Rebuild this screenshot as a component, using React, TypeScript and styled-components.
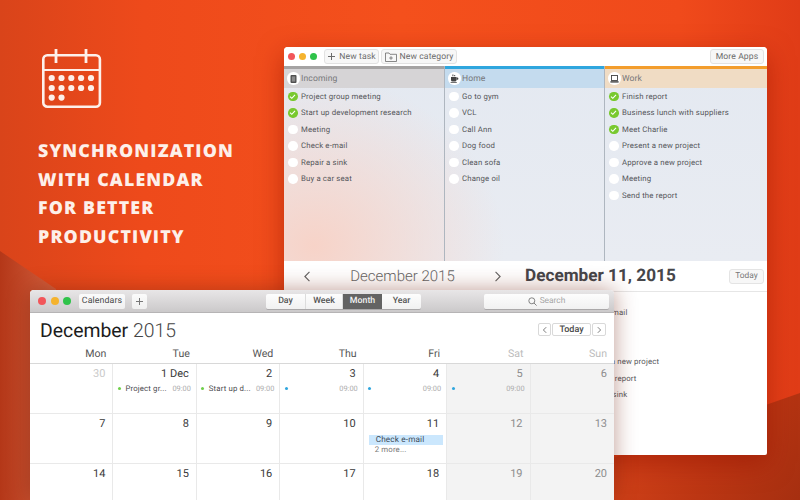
import * as React from 'react';
import styled, { createGlobalStyle } from 'styled-components';

const Global = createGlobalStyle`
  html, body { margin: 0; padding: 0; }
  body {
    font-family: Roboto, "Liberation Sans", sans-serif;
    text-rendering: geometricPrecision;
  }
`;

const Page = styled.div`
  position: relative;
  width: 800px;
  height: 500px;
  overflow: hidden;
  background: linear-gradient(90deg, #d9441a 0%, #ee4a1b 18%, #f4501c 50%, #f04a1b 85%, #e03c17 100%);
`;

const WedgeLeft = styled.div`
  position: absolute;
  left: 0;
  top: 251px;
  width: 56px;
  height: 249px;
  background: linear-gradient(90deg, #b43718, #d4613f);
  clip-path: polygon(0 0, 100% 38px, 100% 100%, 0 100%);
`;

const WedgeRight = styled.div`
  position: absolute;
  right: 0;
  bottom: 0;
  width: 200px;
  height: 107px;
  background: linear-gradient(120deg, #de481c 0%, #bc3613 60%, #a62f10 100%);
  clip-path: polygon(0 65%, 100% 0, 100% 100%, 0 100%);
`;

const Promo = styled.div`
  position: absolute;
  left: 38px;
  top: 49px;
  display: flex;
  flex-direction: column;
`;

const PromoIcon = styled.svg`
  width: 62px;
  height: 60px;
  margin-left: 3px;
`;

const Heading = styled.h1`
  margin: 28px 0 0;
  font-family: "Open Sans", "Liberation Sans", sans-serif;
  font-weight: 800;
  font-size: 17.8px;
  line-height: 28.7px;
  letter-spacing: 1.15px;
  color: #fdf0ea;
  text-transform: uppercase;
`;

const BackWindow = styled.div`
  position: absolute;
  left: 284px;
  top: 47px;
  width: 483px;
  height: 408px;
  background: #fff;
  border-radius: 4px 4px 2px 2px;
  overflow: hidden;
  display: flex;
  flex-direction: column;
  box-shadow: 0 8px 26px rgba(150, 20, 0, 0.55);
`;

const BackToolbar = styled.div`
  height: 19px;
  flex: none;
  display: flex;
  align-items: center;
  padding: 0 3px 0 4px;
  background: #fff;
`;

const Lights = styled.div<{ $size: number; $gap: number }>`
  display: flex;
  gap: ${(p) => p.$gap}px;
  span {
    width: ${(p) => p.$size}px;
    height: ${(p) => p.$size}px;
    border-radius: 50%;
  }
  span:nth-child(1) { background: #f2565a; }
  span:nth-child(2) { background: #f5b32e; }
  span:nth-child(3) { background: #2fc34a; }
`;

const ToolButton = styled.div<{ $width: number; $left?: number }>`
  width: ${(p) => p.$width}px;
  height: 15px;
  margin-left: ${(p) => p.$left || 0}px;
  box-sizing: border-box;
  border: 1px solid #e2e2e2;
  border-radius: 3px;
  background: #f7f7f7;
  display: flex;
  align-items: center;
  justify-content: center;
  gap: 3px;
  font-size: 8.6px;
  letter-spacing: 0.1px;
  color: #6b6b6b;
  white-space: nowrap;
`;

const Spacer = styled.div`
  flex: 1;
`;

const Board = styled.div`
  height: 195px;
  flex: none;
  display: grid;
  grid-template-columns: 161px 160px 162px;
  background:
    radial-gradient(ellipse 190px 170px at 30px 180px, #f7d3c8 0%, rgba(247, 211, 200, 0) 100%),
    linear-gradient(180deg, #e4e9f1, #e9ecf2);
`;

const Column = styled.div`
  display: flex;
  flex-direction: column;
  border-right: 1px solid #aeb6bf;
  &:last-child { border-right: 0; }
`;

const ColumnBar = styled.div<{ $color: string }>`
  height: 3px;
  background: ${(p) => p.$color};
`;

const ColumnHead = styled.div<{ $color: string }>`
  height: 19px;
  display: flex;
  align-items: center;
  gap: 1.5px;
  padding-left: 3px;
  background: ${(p) => p.$color};
  font-size: 8.6px;
  letter-spacing: 0.1px;
  color: #77777a;
`;

const HeadBadge = styled.div`
  width: 12.5px;
  height: 12.5px;
  border-radius: 50%;
  background: #fff;
  display: flex;
  align-items: center;
  justify-content: center;
`;

const TaskList = styled.div`
  display: flex;
  flex-direction: column;
`;

const Task = styled.div`
  height: 16.5px;
  display: flex;
  align-items: center;
  gap: 3.5px;
  padding-left: 4px;
  font-size: 7.8px;
  letter-spacing: 0.15px;
  color: #55565a;
  white-space: nowrap;
`;

const Tick = styled.div<{ $done?: boolean }>`
  width: 9.5px;
  height: 9.5px;
  flex: none;
  border-radius: 50%;
  background: ${(p) => (p.$done ? '#79c92f' : '#fff')};
  display: flex;
  align-items: center;
  justify-content: center;
`;

const DateBar = styled.div`
  height: 31px;
  flex: none;
  box-sizing: border-box;
  border-bottom: 1px solid #e6e6e6;
  display: grid;
  grid-template-columns: 241px 1fr 38px;
  align-items: center;
`;

const MonthNav = styled.div`
  display: flex;
  align-items: center;
  justify-content: space-between;
  padding: 0 0 0 17px;
  margin-right: 21px;
  font-size: 15px;
  font-weight: 300;
  color: #666;
`;

const SelectedDay = styled.div`
  font-size: 17.2px;
  font-weight: 700;
  color: #46464a;
  white-space: nowrap;
`;

const SmallToday = styled.div`
  width: 35px;
  height: 15px;
  border: 1px solid #e4e4e4;
  box-sizing: border-box;
  border-radius: 3px;
  background: #f7f7f7;
  font-size: 8.4px;
  line-height: 13px;
  text-align: center;
  color: #777;
`;

const AgendaList = styled.div`
  padding: 12.5px 0 0 297px;
  display: flex;
  flex-direction: column;
`;

const AgendaRow = styled.div`
  height: 16.5px;
  line-height: 16.5px;
  font-size: 7.8px;
  letter-spacing: 0.15px;
  color: #55565a;
  white-space: nowrap;
`;

const FrontWindow = styled.div`
  position: absolute;
  left: 30px;
  top: 290px;
  width: 584px;
  height: 210px;
  background: #fff;
  border-radius: 4px 4px 0 0;
  overflow: hidden;
  display: flex;
  flex-direction: column;
  box-shadow: 0 0 22px rgba(110, 30, 10, 0.45);
`;

const FrontToolbar = styled.div`
  height: 23px;
  flex: none;
  box-sizing: border-box;
  display: grid;
  grid-template-columns: 228px 155px 1fr;
  align-items: center;
  padding: 0 5px 0 8px;
  background: linear-gradient(180deg, #e8e6e7, #cbc9ca);
  border-bottom: 1px solid #b6b4b5;
`;

const ToolbarLeft = styled.div`
  display: flex;
  align-items: center;
`;

const PlainButton = styled.div<{ $width: number; $left: number }>`
  width: ${(p) => p.$width}px;
  height: 15px;
  margin-left: ${(p) => p.$left}px;
  border-radius: 2px;
  background: linear-gradient(180deg, #fbfbfb, #f0f0f0);
  display: flex;
  align-items: center;
  justify-content: center;
  font-size: 8.8px;
  letter-spacing: 0.1px;
  color: #4a4a4a;
`;

const Segments = styled.div`
  display: grid;
  grid-template-columns: 40px 37px 39px 39px;
  height: 15px;
  border-radius: 2px;
  overflow: hidden;
  background: linear-gradient(180deg, #fdfdfd, #f1f1f1);
  box-shadow: 0 1px 0 #aaa8a9;
`;

const Segment = styled.div<{ $active?: boolean }>`
  display: flex;
  align-items: center;
  justify-content: center;
  font-size: 8.8px;
  font-weight: 500;
  color: ${(p) => (p.$active ? '#f2f2f2' : '#555')};
  background: ${(p) => (p.$active ? '#636363' : 'transparent')};
  border-right: ${(p) => (p.$active ? '0' : '1px solid #dcdcdc')};
  &:last-child { border-right: 0; }
`;

const SearchBox = styled.div`
  justify-self: end;
  width: 125px;
  height: 15px;
  border-radius: 2px;
  background: linear-gradient(180deg, #fdfdfd, #f1f1f1);
  box-shadow: 0 1px 0 #aaa8a9;
  display: flex;
  align-items: center;
  justify-content: center;
  gap: 3px;
  font-size: 8.4px;
  color: #a5a5a5;
`;

const TitleRow = styled.div`
  height: 40px;
  flex: none;
  display: flex;
  justify-content: space-between;
  padding: 5px 8px 0 10px;
  box-sizing: border-box;
`;

const MonthTitle = styled.div`
  font-size: 19.4px;
  line-height: 26px;
  font-weight: 400;
  color: #1c1c1c;
  span {
    font-weight: 300;
    color: #444;
  }
`;

const Stepper = styled.div`
  display: grid;
  grid-template-columns: 13px 39px 14px;
  gap: 1px;
  height: 13px;
  margin-top: 5px;
`;

const StepButton = styled.div`
  border: 1px solid #d9d9d9;
  border-radius: 2px;
  display: flex;
  align-items: center;
  justify-content: center;
  font-size: 9px;
  font-weight: 500;
  color: #4a4a4a;
`;

const DayHeader = styled.div`
  height: 10px;
  flex: none;
  display: grid;
  grid-template-columns: repeat(7, 1fr);
  border-bottom: 1px solid #d8d8d8;
  padding-bottom: 4px;
  margin-top: -5px;
  padding-top: 1px;
  box-sizing: content-box;
`;

const DayName = styled.div<{ $weekend?: boolean }>`
  text-align: right;
  padding-right: 7px;
  font-size: 10.6px;
  line-height: 10px;
  color: ${(p) => (p.$weekend ? '#bcbcbc' : '#555')};
`;

const Grid = styled.div`
  display: grid;
  grid-template-columns: repeat(7, 1fr);
  grid-auto-rows: 50px;
`;

const Cell = styled.div<{ $weekend?: boolean }>`
  box-sizing: border-box;
  border-right: 1px solid #e9e9e9;
  border-bottom: 1px solid #e9e9e9;
  background: ${(p) => (p.$weekend ? '#f3f3f3' : '#fff')};
  padding-top: 3px;
  min-width: 0;
  &:nth-child(7n) { border-right: 0; }
`;

const DayNumber = styled.div<{ $tone: 'strong' | 'weekend' | 'muted' }>`
  text-align: right;
  padding-right: 7px;
  font-size: 11px;
  line-height: 14px;
  color: ${(p) => (p.$tone === 'strong' ? '#3a3a3a' : p.$tone === 'weekend' ? '#8c8c8c' : '#c9c9c9')};
`;

const EventRow = styled.div`
  display: flex;
  align-items: center;
  height: 12px;
  margin-top: 1px;
  padding: 0 5px 0 4.5px;
  font-size: 7.8px;
  color: #4b4b4f;
`;

const Dot = styled.i<{ $color: string }>`
  width: 3px;
  height: 3px;
  flex: none;
  border-radius: 50%;
  background: ${(p) => p.$color};
  margin-right: 4.5px;
`;

const EventName = styled.span`
  flex: 1;
  white-space: nowrap;
  letter-spacing: 0.15px;
`;

const EventTime = styled.span`
  color: #ababab;
  font-size: 7.4px;
`;

const Highlight = styled.div`
  height: 10px;
  margin: 4px 3px 0 5px;
  padding-left: 7px;
  background: #cbe7fd;
  font-size: 8.2px;
  line-height: 10px;
  letter-spacing: 0.15px;
  color: #3c4a58;
`;

const MoreLabel = styled.div`
  padding: 0 0 0 11px;
  font-size: 7.8px;
  line-height: 10px;
  letter-spacing: 0.15px;
  color: #777;
`;

const Chevron = ({ left, size = 10 }: { left?: boolean; size?: number }) => (
  <svg width={size} height={size} viewBox="0 0 10 10" fill="none" stroke="currentColor" strokeWidth="0.9">
    <path d={left ? 'M6.5 1.5 3 5l3.5 3.5' : 'M3.5 1.5 7 5 3.5 8.5'} />
  </svg>
);

const CheckMark = () => (
  <svg width="7" height="7" viewBox="0 0 7 7" fill="none" stroke="#fff" strokeWidth="1.1">
    <path d="M1 3.6 2.8 5.3 6 1.8" />
  </svg>
);

const NotebookGlyph = () => (
  <svg width="7" height="8" viewBox="0 0 7 8">
    <rect x="0.5" y="0" width="6" height="8" rx="1" fill="#4f4f4f" />
    <rect x="1.8" y="1.4" width="3.4" height="5.2" fill="#8b8b8b" />
  </svg>
);

const CupGlyph = () => (
  <svg width="9" height="9" viewBox="0 0 9 9" fill="#444">
    <path d="M1 3h5.5v3a1.6 1.6 0 0 1-1.6 1.6H2.6A1.6 1.6 0 0 1 1 6z" />
    <path d="M6.5 3.6h.8a1 1 0 0 1 0 2.2h-.8z" />
    <path d="M2.4.6h1v1.6h-1zM4.2 1h1v1.2h-1zM.6 8h6.2v.7H.6z" />
  </svg>
);

const LaptopGlyph = () => (
  <svg width="9" height="8" viewBox="0 0 9 8">
    <rect x="1.5" y="0.5" width="6" height="5" fill="none" stroke="#444" strokeWidth="0.9" />
    <rect x="0.4" y="6.2" width="8.2" height="1.4" fill="#444" />
  </svg>
);

const PlusGlyph = ({ color }: { color: string }) => (
  <svg width="9" height="9" viewBox="0 0 9 9" stroke={color} strokeWidth="1">
    <path d="M4.5 1v7M1 4.5h7" />
  </svg>
);

const FolderGlyph = () => (
  <svg width="12" height="10" viewBox="0 0 12 10" fill="none" stroke="#6b6b6b" strokeWidth="0.8">
    <path d="M.5 1h3.5l1 1.3h6.5v7.2H.5z" />
    <path d="M6 4.2v3.6M4.2 6h3.6" />
  </svg>
);

const SearchGlyph = () => (
  <svg width="9" height="9" viewBox="0 0 9 9" fill="none" stroke="#777" strokeWidth="0.9">
    <circle cx="3.8" cy="3.8" r="3" />
    <path d="M6 6l2.6 2.6" />
  </svg>
);

const dots: [number, number][] = [
  [10.7, 29], [20.5, 29], [30.3, 29], [40.1, 29], [50, 29],
  [10.7, 39], [20.5, 39], [30.3, 39], [40.1, 39], [50, 39],
  [10.7, 48.6], [20.5, 48.6],
];

const CalendarIcon = () => (
  <PromoIcon viewBox="0 0 62 60" fill="none">
    <rect x="2.3" y="6.3" width="56.6" height="51.4" rx="4" stroke="#fdf0ea" strokeWidth="2.6" />
    <path d="M2 21h57" stroke="#fdf0ea" strokeWidth="2.2" />
    <path d="M15 0v14M45 0v14" stroke="#fdf0ea" strokeWidth="2.8" />
    {dots.map(([cx, cy]) => (
      <circle key={`${cx}-${cy}`} cx={cx} cy={cy} r="3.1" fill="#fdf0ea" />
    ))}
  </PromoIcon>
);

const columns = [
  {
    name: 'Incoming',
    bar: '#a5a3a3',
    head: '#d6d4d6',
    icon: <NotebookGlyph />,
    tasks: [
      ['Project group meeting', true],
      ['Start up development research', true],
      ['Meeting', false],
      ['Check e-mail', false],
      ['Repair a sink', false],
      ['Buy a car seat', false],
    ],
  },
  {
    name: 'Home',
    bar: '#2fa6de',
    head: '#c4dbee',
    icon: <CupGlyph />,
    tasks: [
      ['Go to gym', false],
      ['VCL', false],
      ['Call Ann', false],
      ['Dog food', false],
      ['Clean sofa', false],
      ['Change oil', false],
    ],
  },
  {
    name: 'Work',
    bar: '#f39d2c',
    head: '#f0dcc4',
    icon: <LaptopGlyph />,
    tasks: [
      ['Finish report', true],
      ['Business lunch with suppliers', true],
      ['Meet Charlie', true],
      ['Present a new project', false],
      ['Approve a new project', false],
      ['Meeting', false],
      ['Send the report', false],
    ],
  },
] as const;

const agenda = ['Check e-mail', '', '', 'Present a new project', 'Send the report', 'Repair a sink'];

const dayNames = ['Mon', 'Tue', 'Wed', 'Thu', 'Fri', 'Sat', 'Sun'];

const weeks = [
  ['30', '1 Dec', '2', '3', '4', '5', '6'],
  ['7', '8', '9', '10', '11', '12', '13'],
  ['14', '15', '16', '17', '18', '19', '20'],
];

const firstWeekEvents: Record<number, { color: string; name: string }> = {
  1: { color: '#6fcf4a', name: 'Project gr...' },
  2: { color: '#6fcf4a', name: 'Start up d...' },
  3: { color: '#2fa6de', name: '' },
  4: { color: '#2fa6de', name: '' },
  5: { color: '#2fa6de', name: '' },
};

const App = () => {
  return (
    <Page>
      <Global />
      <WedgeLeft />
      <WedgeRight />
      <Promo>
        <CalendarIcon />
        <Heading>
          Synchronization
          <br />
          with calendar
          <br />
          for better
          <br />
          productivity
        </Heading>
      </Promo>

      <BackWindow>
        <BackToolbar>
          <Lights $size={7} $gap={4}>
            <span />
            <span />
            <span />
          </Lights>
          <ToolButton $width={55} $left={7}>
            <PlusGlyph color="#6b6b6b" />
            New task
          </ToolButton>
          <ToolButton $width={76} $left={2}>
            <FolderGlyph />
            New category
          </ToolButton>
          <Spacer />
          <ToolButton $width={54}>More Apps</ToolButton>
        </BackToolbar>
        <Board>
          {columns.map((col) => (
            <Column key={col.name}>
              <ColumnBar $color={col.bar} />
              <ColumnHead $color={col.head}>
                <HeadBadge>{col.icon}</HeadBadge>
                {col.name}
              </ColumnHead>
              <TaskList>
                {col.tasks.map(([label, done]) => (
                  <Task key={label}>
                    <Tick $done={done}>{done && <CheckMark />}</Tick>
                    {label}
                  </Task>
                ))}
              </TaskList>
            </Column>
          ))}
        </Board>
        <DateBar>
          <MonthNav>
            <Chevron left size={13} />
            December 2015
            <Chevron size={13} />
          </MonthNav>
          <SelectedDay>December 11, 2015</SelectedDay>
          <SmallToday>Today</SmallToday>
        </DateBar>
        <AgendaList>
          {agenda.map((label, i) => (
            <AgendaRow key={i}>{label || '\u00a0'}</AgendaRow>
          ))}
        </AgendaList>
      </BackWindow>

      <FrontWindow>
        <FrontToolbar>
          <ToolbarLeft>
            <Lights $size={8} $gap={4.5}>
              <span />
              <span />
              <span />
            </Lights>
            <PlainButton $width={46} $left={8}>
              Calendars
            </PlainButton>
            <PlainButton $width={15} $left={7}>
              <PlusGlyph color="#777" />
            </PlainButton>
          </ToolbarLeft>
          <Segments>
            <Segment>Day</Segment>
            <Segment>Week</Segment>
            <Segment $active>Month</Segment>
            <Segment>Year</Segment>
          </Segments>
          <SearchBox>
            <SearchGlyph />
            Search
          </SearchBox>
        </FrontToolbar>
        <TitleRow>
          <MonthTitle>
            December <span>2015</span>
          </MonthTitle>
          <Stepper>
            <StepButton>
              <Chevron left size={8} />
            </StepButton>
            <StepButton>Today</StepButton>
            <StepButton>
              <Chevron size={8} />
            </StepButton>
          </Stepper>
        </TitleRow>
        <DayHeader>
          {dayNames.map((d, i) => (
            <DayName key={d} $weekend={i > 4}>
              {d}
            </DayName>
          ))}
        </DayHeader>
        <Grid>
          {weeks.map((week, w) =>
            week.map((num, d) => {
              const ev = w === 0 ? firstWeekEvents[d] : undefined;
              const tone = w === 0 && d === 0 ? 'muted' : d > 4 ? 'weekend' : 'strong';
              return (
                <Cell key={num} $weekend={d > 4}>
                  <DayNumber $tone={tone}>{num}</DayNumber>
                  {ev && (
                    <EventRow>
                      <Dot $color={ev.color} />
                      <EventName>{ev.name}</EventName>
                      <EventTime>09:00</EventTime>
                    </EventRow>
                  )}
                  {num === '11' && (
                    <>
                      <Highlight>Check e-mail</Highlight>
                      <MoreLabel>2 more...</MoreLabel>
                    </>
                  )}
                </Cell>
              );
            })
          )}
        </Grid>
      </FrontWindow>
    </Page>
  );
};

export default App;
